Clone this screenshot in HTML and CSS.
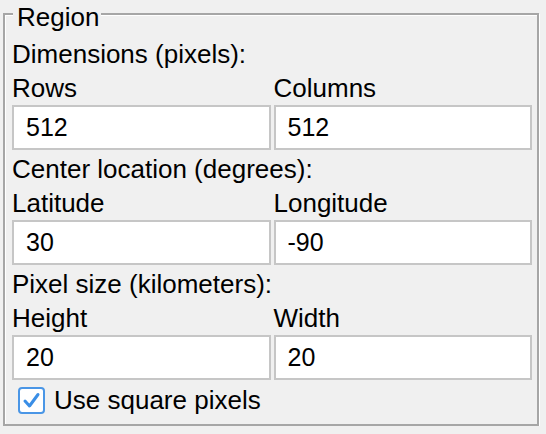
FILE: index.html
```html
<!DOCTYPE html>
<html>
<head>
<meta charset="utf-8">
<link rel="stylesheet" href="styles.css">
</head>
<body>
<fieldset class="region">
  <legend class="region-title">Region</legend>

  <section class="group">
    <div class="heading">Dimensions (pixels):</div>
    <div class="fields">
      <label class="field"><span class="label">Rows</span><input class="entry" type="text" value="512"></label>
      <label class="field"><span class="label">Columns</span><input class="entry" type="text" value="512"></label>
    </div>
  </section>

  <section class="group">
    <div class="heading">Center location (degrees):</div>
    <div class="fields">
      <label class="field"><span class="label">Latitude</span><input class="entry" type="text" value="30"></label>
      <label class="field"><span class="label">Longitude</span><input class="entry" type="text" value="-90"></label>
    </div>
  </section>

  <section class="group">
    <div class="heading">Pixel size (kilometers):</div>
    <div class="fields">
      <label class="field"><span class="label">Height</span><input class="entry" type="text" value="20"></label>
      <label class="field"><span class="label">Width</span><input class="entry" type="text" value="20"></label>
    </div>
  </section>

  <label class="check">
    <span class="check-box">
      <svg width="23" height="23" viewBox="0 0 23 23"><path d="M5 12 L9.5 17 L18 5.5" fill="none" stroke="#3a8ee6" stroke-width="3" stroke-linecap="round" stroke-linejoin="round"/></svg>
    </span>
    <span class="check-label">Use square pixels</span>
  </label>
</fieldset>
</body>
</html>
```

FILE: styles.css
```css
html, body {
  margin: 0;
  padding: 0;
  background: #f0f0f0;
}

body {
  font-family: "Liberation Sans", Arial, sans-serif;
  font-size: 26px;
  color: #000;
}

.region {
  margin: 0 7px 0 3px;
  padding: 7px 5px 7px 7px;
  border: 2px solid #a6a6a6;
  box-shadow: 1px 1px 0 #fff, inset 1px 1px 0 #fff;
  min-width: 0;
}

.region-title {
  margin-left: 1px;
  padding: 6px 2px 0 4px;
  line-height: 22px;
  background: #f0f0f0;
}

.group {
  display: flex;
  flex-direction: column;
}

.heading,
.label {
  box-sizing: border-box;
  height: 34px;
  padding-top: 4px;
  line-height: 30px;
  white-space: nowrap;
}

.fields {
  display: grid;
  grid-template-columns: 1fr 1fr;
  column-gap: 3px;
}

.field {
  display: flex;
  flex-direction: column;
  gap: 2px;
  min-width: 0;
}

.entry {
  -webkit-appearance: none;
  appearance: none;
  box-sizing: border-box;
  width: 100%;
  height: 45px;
  margin: 0;
  padding: 0 12px;
  border: 2px solid #c6c6c6;
  border-radius: 0;
  background: #fff;
  font-family: "Liberation Sans", Arial, sans-serif;
  font-size: 25px;
  color: #000;
  outline: none;
}

.check {
  display: flex;
  align-items: center;
  gap: 9px;
  margin-top: 3px;
  margin-left: 6px;
  line-height: 34px;
}

.check-box {
  box-sizing: border-box;
  width: 27px;
  height: 27px;
  border: 2px solid #4a96e6;
  border-radius: 4px;
  background: #fff;
  display: flex;
  align-items: center;
  justify-content: center;
}

.check-box svg {
  display: block;
}
```
